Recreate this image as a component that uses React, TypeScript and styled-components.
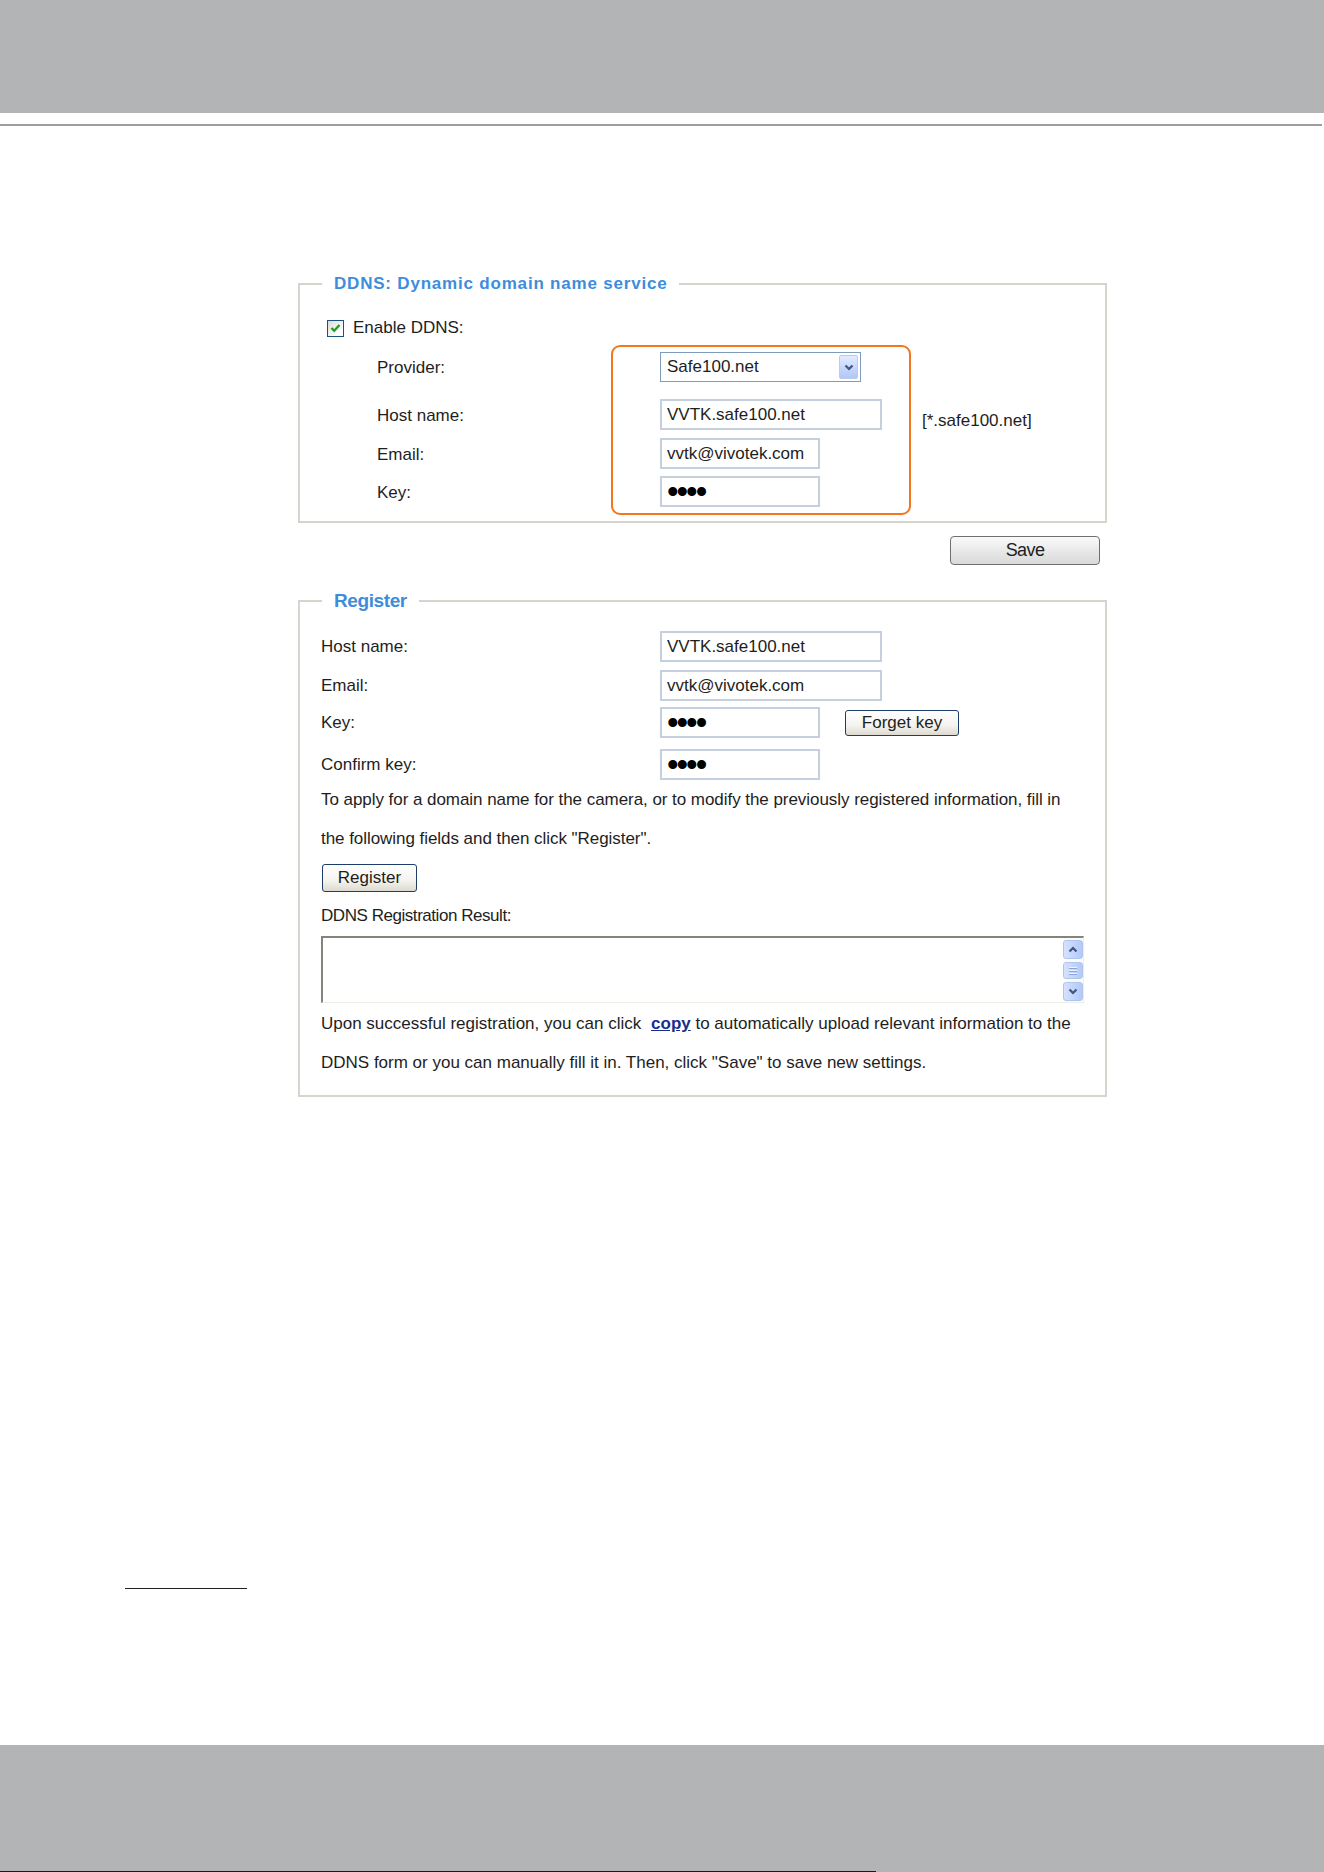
import React from 'react'
import styled, { createGlobalStyle } from 'styled-components'

const GlobalStyle = createGlobalStyle`
  html, body {
    margin: 0;
    padding: 0;
    background: #ffffff;
  }
  body {
    font-family: "Liberation Sans", Arial, sans-serif;
    font-size: 17px;
    color: #1e1e1e;
  }
  * {
    box-sizing: border-box;
  }
`

const Page = styled.div`
  width: 1324px;
  min-height: 1872px;
  display: flex;
  flex-direction: column;
`

const TopBand = styled.header`
  height: 113px;
  background: #b3b4b6;
`

const TopRule = styled.div`
  margin-top: 11px;
  width: 1322px;
  height: 2px;
  background: #9c9d9f;
`

const Content = styled.main`
  margin: 148px 0 0 298px;
  width: 809px;
  display: flex;
  flex-direction: column;
`

const Group = styled.fieldset<{ $pb: number }>`
  margin: 0;
  min-width: 0;
  padding: 0 0 ${(p) => p.$pb}px 0;
  border: 2px solid #d7d4ce;
`

const Legend = styled.legend<{ $narrow?: boolean }>`
  margin-left: 22px;
  padding: 0 12px;
  font-size: ${(p) => (p.$narrow ? 19 : 17)}px;
  line-height: 20px;
  font-weight: bold;
  color: #3d8ddb;
  letter-spacing: ${(p) => (p.$narrow ? '-0.4px' : '0.8px')};
`

const CheckRow = styled.div`
  margin-top: 22px;
  height: 24px;
  padding-left: 27px;
  display: flex;
  align-items: center;
  gap: 9px;
`

const CheckBox = styled.span`
  width: 17px;
  height: 17px;
  border: 1px solid #1c5180;
  background: linear-gradient(135deg, #dcdcd7 0%, #ffffff 80%);
  display: flex;
  align-items: center;
  justify-content: center;
`

const FormBlock = styled.div`
  margin-top: 5px;
  display: flex;
  align-items: flex-start;
`

const LabelCol = styled.div`
  margin-left: 77px;
  width: 234px;
  padding-top: 8px;
  display: flex;
  flex-direction: column;
`

const Highlight = styled.div`
  width: 300px;
  padding: 5px 27px 6px 47px;
  border: 2px solid #f0781f;
  border-radius: 9px;
  display: flex;
  flex-direction: column;
`

const Slot = styled.div<{ $h: number; $gap: number }>`
  height: ${(p) => p.$h}px;
  margin-top: ${(p) => p.$gap}px;
  display: flex;
  align-items: center;
`

const Note = styled.span`
  margin: 66px 0 0 11px;
  line-height: 20px;
`

const Field = styled.input<{ $w: number }>`
  width: ${(p) => p.$w}px;
  height: 31px;
  margin: 0;
  padding: 0 5px;
  border: 2px solid #c6cfdd;
  background: #ffffff;
  font-family: "Liberation Sans", Arial, sans-serif;
  font-size: 17px;
  color: #1e1e1e;
  outline: none;
`

const KeyField = styled(Field)`
  font-size: 33px;
  letter-spacing: -2px;
  padding-left: 5px;
  color: #000;
`

const SelectBox = styled.div`
  width: 201px;
  height: 30px;
  border: 1px solid #7f9db9;
  background: #ffffff;
  display: flex;
  align-items: center;
  padding: 2px 2px 2px 6px;
`

const SelectValue = styled.span`
  flex: 1;
`

const DropButton = styled.span`
  width: 19px;
  height: 24px;
  border-radius: 2px;
  border: 1px solid #b8cbf2;
  background: linear-gradient(180deg, #e3ebff 0%, #c3d4fb 60%, #b3c7f5 100%);
  display: flex;
  align-items: center;
  justify-content: center;
`

const SaveRow = styled.div`
  margin-top: 13px;
  padding-right: 7px;
  display: flex;
  justify-content: flex-end;
`

const SaveButton = styled.button`
  width: 150px;
  height: 29px;
  margin: 0;
  padding: 0;
  border: 1px solid #6f6f6f;
  border-radius: 4px;
  background: linear-gradient(180deg, #fafafa 0%, #e9e9e9 50%, #d9d9d9 100%);
  font-family: "Liberation Sans", Arial, sans-serif;
  font-size: 18px;
  letter-spacing: -0.6px;
  color: #1e1e1e;
`

const XpButton = styled.button<{ $w: number; $h: number }>`
  width: ${(p) => p.$w}px;
  height: ${(p) => p.$h}px;
  margin: 0;
  padding: 0;
  border: 1px solid #1d3d6b;
  border-radius: 3px;
  background: linear-gradient(180deg, #ffffff 0%, #f4f3ee 60%, #dcdad0 100%);
  font-family: "Liberation Sans", Arial, sans-serif;
  font-size: 17px;
  color: #1e1e1e;
`

const RegisterSpacer = styled.div`
  height: 26px;
`

const RegRow = styled.div<{ $gap: number }>`
  margin-top: ${(p) => p.$gap}px;
  height: 31px;
  padding-left: 21px;
  display: flex;
  align-items: center;
`

const RegLabel = styled.span`
  width: 339px;
`

const ForgetSlot = styled.span`
  margin-left: 25px;
  display: flex;
`

const Para = styled.p<{ $spacing?: number; $top?: number }>`
  margin: ${(p) => p.$top ?? 0}px 0 0 0;
  padding-left: 21px;
  line-height: 39px;
  letter-spacing: ${(p) => p.$spacing ?? 0}px;
`

const RegisterWrap = styled.div`
  margin: 6px 0 0 22px;
  display: flex;
`

const ResultLabel = styled.div`
  margin-top: 9px;
  padding-left: 21px;
  line-height: 30px;
  letter-spacing: -0.45px;
`

const ResultBox = styled.div`
  margin: 5px 0 0 21px;
  width: 763px;
  height: 67px;
  border-style: solid;
  border-width: 2px 1px 1px 2px;
  border-color: #85847c #eeede5 #eeede5 #85847c;
  background: #ffffff;
  display: flex;
  justify-content: flex-end;
`

const ScrollTrack = styled.div`
  width: 20px;
  padding: 2px 0 1px 0;
  background: #fbfbf9;
  display: flex;
  flex-direction: column;
  justify-content: space-between;
`

const ScrollPart = styled.span<{ $h: number }>`
  height: ${(p) => p.$h}px;
  border: 1px solid #b0c4f2;
  border-radius: 3px;
  background: linear-gradient(90deg, #d6e2fe 0%, #c0d3fb 60%, #b4c9f7 100%);
  display: flex;
  align-items: center;
  justify-content: center;
`

const CopyLink = styled.a`
  margin-left: 5px;
  color: #1c2c8c;
  font-weight: bold;
  text-decoration: underline;
`

const Footnote = styled.div`
  margin: 491px 0 0 125px;
  width: 122px;
  height: 1px;
  background: #231f20;
`

const BottomBand = styled.footer`
  margin-top: auto;
  height: 127px;
  background: #b3b4b6;
  display: flex;
  flex-direction: column;
  justify-content: flex-end;
`

const EdgeLine = styled.div`
  width: 876px;
  height: 1px;
  background: #1a1a1a;
`

const Chevron = ({ up = false, size = 9, color = '#4d6185' }: { up?: boolean; size?: number; color?: string }) => (
  <svg width={size} height={size * 0.7} viewBox="0 0 10 7">
    <path
      d={up ? 'M1.5 5.5 L5 2 L8.5 5.5' : 'M1.5 1.5 L5 5 L8.5 1.5'}
      fill="none"
      stroke={color}
      strokeWidth="2.2"
    />
  </svg>
)

const Grip = () => (
  <svg width="10" height="9" viewBox="0 0 10 9">
    {[1, 4, 7].map((y) => (
      <line key={y} x1="1" x2="9" y1={y + 0.5} y2={y + 0.5} stroke="#eef3ff" strokeWidth="1" />
    ))}
    {[2, 5, 8].map((y) => (
      <line key={y} x1="1" x2="9" y1={y + 0.5} y2={y + 0.5} stroke="#8ca4da" strokeWidth="1" />
    ))}
  </svg>
)

const ddnsRows = [
  { label: 'Provider:', h: 30, gap: 0 },
  { label: 'Host name:', h: 31, gap: 17 },
  { label: 'Email:', h: 31, gap: 8 },
  { label: 'Key:', h: 31, gap: 7 },
]

export default function App() {
  return (
    <Page>
      <GlobalStyle />
      <TopBand />
      <TopRule />
      <Content>
        <Group $pb={6}>
          <Legend>DDNS: Dynamic domain name service</Legend>
          <CheckRow>
            <CheckBox>
              <svg width="11" height="10" viewBox="0 0 11 10">
                <path d="M1.5 5 L4.2 7.8 L9.5 2" fill="none" stroke="#21a121" strokeWidth="2.4" />
              </svg>
            </CheckBox>
            <span>Enable DDNS:</span>
          </CheckRow>
          <FormBlock>
            <LabelCol>
              {ddnsRows.map((r) => (
                <Slot key={r.label} $h={r.h} $gap={r.gap}>
                  {r.label}
                </Slot>
              ))}
            </LabelCol>
            <Highlight>
              <Slot $h={30} $gap={0}>
                <SelectBox>
                  <SelectValue>Safe100.net</SelectValue>
                  <DropButton>
                    <Chevron size={10} color="#3f5480" />
                  </DropButton>
                </SelectBox>
              </Slot>
              <Slot $h={31} $gap={17}>
                <Field $w={222} readOnly value="VVTK.safe100.net" />
              </Slot>
              <Slot $h={31} $gap={8}>
                <Field $w={160} readOnly value="vvtk@vivotek.com" />
              </Slot>
              <Slot $h={31} $gap={7}>
                <KeyField $w={160} type="password" readOnly value="1234" />
              </Slot>
            </Highlight>
            <Note>[*.safe100.net]</Note>
          </FormBlock>
        </Group>

        <SaveRow>
          <SaveButton>Save</SaveButton>
        </SaveRow>

        <RegisterSpacer />

        <Group $pb={13}>
          <Legend $narrow>Register</Legend>
          <RegRow $gap={20}>
            <RegLabel>Host name:</RegLabel>
            <Field $w={222} readOnly value="VVTK.safe100.net" />
          </RegRow>
          <RegRow $gap={8}>
            <RegLabel>Email:</RegLabel>
            <Field $w={222} readOnly value="vvtk@vivotek.com" />
          </RegRow>
          <RegRow $gap={6}>
            <RegLabel>Key:</RegLabel>
            <KeyField $w={160} type="password" readOnly value="1234" />
            <ForgetSlot>
              <XpButton $w={114} $h={26}>Forget key</XpButton>
            </ForgetSlot>
          </RegRow>
          <RegRow $gap={11}>
            <RegLabel>Confirm key:</RegLabel>
            <KeyField $w={160} type="password" readOnly value="1234" />
          </RegRow>
          <Para $spacing={-0.05}>
            To apply for a domain name for the camera, or to modify the previously registered information, fill in
            <br />
            the following fields and then click "Register".
          </Para>
          <RegisterWrap>
            <XpButton $w={95} $h={28}>Register</XpButton>
          </RegisterWrap>
          <ResultLabel>DDNS Registration Result:</ResultLabel>
          <ResultBox>
            <ScrollTrack>
              <ScrollPart $h={19}>
                <Chevron up size={10} color="#3f5480" />
              </ScrollPart>
              <ScrollPart $h={17}>
                <Grip />
              </ScrollPart>
              <ScrollPart $h={19}>
                <Chevron size={10} color="#3f5480" />
              </ScrollPart>
            </ScrollTrack>
          </ResultBox>
          <Para $top={1}>
            Upon successful registration, you can click <CopyLink href="#">copy</CopyLink> to automatically upload
            relevant information to the
            <br />
            DDNS form or you can manually fill it in. Then, click "Save" to save new settings.
          </Para>
        </Group>
      </Content>
      <Footnote />
      <BottomBand>
        <EdgeLine />
      </BottomBand>
    </Page>
  )
}
